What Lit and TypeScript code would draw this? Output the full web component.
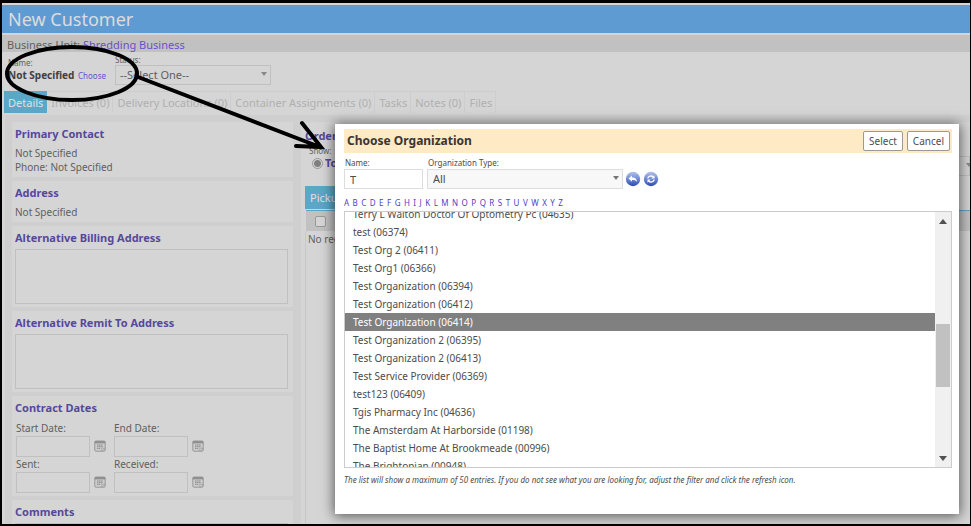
import { LitElement, html, css, svg } from "lit";
import { customElement } from "lit/decorators.js";
import { classMap } from "lit/directives/class-map.js";

const calendar = html`<svg viewBox="0 0 12 12" width="12" height="12" aria-hidden="true">
  <rect x=".8" y="1" width="10.400" height="10.200" rx="1.200" fill="#cdcdcd" stroke="#989898" />
  <path d="M.8 1h10.400v2.400H.8z" fill="#909090" />
  <path d="M3 5h6M3 6.700h6M3 8.400h3.500" stroke="#8a8a8a" stroke-dasharray="1.400 .4" />
  <path d="M7.800 11.200V8.300H11.200z" fill="#dedede" stroke="#989898" stroke-width=".7" />
</svg>`;
const caret = html`<svg class="caret" viewBox="0 0 6 4" width="6" height="4" aria-hidden="true"><path d="M0 0h6L3 4z" fill="currentColor" /></svg>`;

const orb = (glyph: unknown, id: string) => html`<svg viewBox="0 0 16 16" width="16" height="16" aria-hidden="true">
  <defs><linearGradient id=${id} x1="0" y1="0" x2="0" y2="1">
    <stop offset="0" stop-color="#b4c2ea" /><stop offset=".5" stop-color="#6f8ad6" /><stop offset="1" stop-color="#2c49ad" />
  </linearGradient></defs>
  <circle cx="8" cy="8" r="7.200" fill="url(#${id})" />
  ${glyph}
</svg>`;
const backIcon = orb(svg`<path d="M3.500 7.500L7 4.500v2c3 0 5 1.300 5 4.500-1-1.700-2.500-2-5-2v1.700z" fill="#fff" />`, "back");
const refreshIcon = orb(svg`<path d="M4.800 7.300C5.300 5 8.500 4.300 10.200 5.800M11.200 8.700c-.5 2.300-3.700 3-5.400 1.500" fill="none" stroke="#fff" stroke-width="1.400" /><path d="M11.500 4.300v3.200H8.300zM4.500 11.700V8.500h3.200z" fill="#fff" />`, "refresh");

@customElement("choose-organization")
export class ChooseOrganization extends LitElement {
  static styles = css`
    :host { display: flex; flex-direction: column; box-sizing: border-box; background: #fff; padding: 5px 7px 0 9px;
      box-shadow: 0 1px 12px 1px #0009; color: #4c4c4c; font-size: 10px; }
    * { box-sizing: border-box; }
    button, input, select { font: inherit; color: inherit; margin: 0; }
    header { display: flex; align-items: center; gap: 4px; background: #feeac4; height: 24px; padding: 0 2px 0 3px; flex: none; }
    h2 { flex: 1; margin: 0; font-size: 12px; line-height: 20px; color: #3a3530; }
    .action { height: 20px; padding: 0 5px; background: #fff; border: 1px solid #999; border-radius: 2px; line-height: 16px; }
    .filters { display: flex; align-items: flex-end; gap: 4px; margin-top: 4px; }
    .field { display: flex; flex-direction: column; }
    label { font-size: 8px; line-height: 12px; padding-left: 1px; }
    .field input { width: 79px; height: 20px; padding: 0 5px; border: 1px solid #ddd; background: #fff; font-size: 11px; outline: 0; }
    .drop { position: relative; display: block; }
    .drop select { display: block; appearance: none; width: 196px; height: 20px; padding: 0 5px; border: 1px solid #ddd; background: #f8f8f8; border-radius: 0; font-size: 11px; }
    .caret { position: absolute; right: 4px; top: 7px; color: #777; }
    .round { display: flex; padding: 0; border: 0; background: none; width: 16px; height: 20px; align-items: center; justify-content: center; }
    .round svg { flex: none; }
    .icons { display: flex; gap: 2px; margin-left: -2px; }
    .letters { display: flex; justify-content: space-between; width: 219px; margin-top: 8px; font-size: 8px; line-height: 12px; }
    .letters a { color: #4f3fc0; text-decoration: none; }
    .list { display: flex; flex: 1; min-height: 0; margin-top: 2px; border: 1px solid #ccc; }
    ul { flex: 1; margin: 0; padding: 0; list-style: none; overflow: hidden; }
    li { height: 18px; line-height: 18px; padding: 0 8px; }
    .chosen { background: #808080; color: #fff; }
    .bar { display: flex; flex-direction: column; align-items: center; width: 16px; padding: 7px 0 6px; background: #f0f0f0; color: #505050; }
    .bar svg { flex: none; }
    .thumb { width: 14px; height: 63px; background: #c1c1c1; margin: 100px 0 auto; }
    .note { margin: 6px 0 28px; font-size: 8px; line-height: 12px; font-style: italic; }
  `;
  private names = ["Terry L Walton Doctor Of Optometry Pc (04635)", "test (06374)", "Test Org 2 (06411)", "Test Org1 (06366)",
    "Test Organization (06394)", "Test Organization (06412)", "Test Organization (06414)", "Test Organization 2 (06395)",
    "Test Organization 2 (06413)", "Test Service Provider (06369)", "test123 (06409)", "Tgis Pharmacy Inc (04636)",
    "The Amsterdam At Harborside (01198)", "The Baptist Home At Brookmeade (00996)", "The Brightonian (00948)"];
  private selected = 6;

  firstUpdated() {
    this.renderRoot.querySelector("ul")!.scrollTop = 7;
  }

  render() {
    return html`
      <header><h2>Choose Organization</h2><button class="action">Select</button><button class="action">Cancel</button></header>
      <div class="filters">
        <div class="field"><label for="name">Name:</label><input id="name" value="T" /></div>
        <div class="field"><label for="type">Organization Type:</label><span class="drop"><select id="type"><option>All</option></select>${caret}</span></div>
        <div class="icons"><button class="round" aria-label="Reset filter">${backIcon}</button>
        <button class="round" aria-label="Refresh list">${refreshIcon}</button></div>
      </div>
      <nav class="letters">${[..."ABCDEFGHIJKLMNOPQRSTUVWXYZ"].map((l) => html`<a href="#${l}">${l}</a>`)}</nav>
      <div class="list">
        <ul role="listbox" aria-label="Organizations">${this.names.map((n, i) => html`<li role="option" aria-selected=${i === this.selected} class=${classMap({ chosen: i === this.selected })}>${n}</li>`)}</ul>
        <div class="bar" aria-hidden="true">
          <svg width="8" height="5" viewBox="0 0 8 5"><path d="M0 5h8L4 0z" fill="currentColor" /></svg>
          <div class="thumb"></div>
          <svg width="8" height="5" viewBox="0 0 8 5"><path d="M0 0h8L4 5z" fill="currentColor" /></svg>
        </div>
      </div>
      <p class="note">The list will show a maximum of 50 entries. If you do not see what you are looking for, adjust the filter and click the refresh icon.</p>`;
  }
}

@customElement("app-root")
export class AppRoot extends LitElement {
  static styles = css`
    :host { display: flex; flex-direction: column; box-sizing: border-box; position: relative; height: 100vh; overflow: hidden;
      border: solid #000; border-width: 3px 1px 2px 2px; background: #d5d5d5; color: #606060;
      font-family: "Noto Sans", "Open Sans", sans-serif; font-size: 10px; line-height: 14px; }
    * { box-sizing: border-box; }
    a { color: #6a4fd0; text-decoration: none; }
    input, select, textarea { font: inherit; color: inherit; margin: 0; border: 1px solid #c0c0c0; background: #d5d5d5; border-radius: 0; }
    h1 { margin: 2px 0; padding: 1px 6px 0; background: #5f9bd3; color: #dcdcdc; font-size: 18px; font-weight: 400; line-height: 27px; flex: none; }
    .unit { padding: 2px 5px 0; background: #c1c1c1; font-size: 11px; line-height: 15px; flex: none; }
    .ident { display: flex; gap: 10px; padding: 3px 6px 0; height: 39px; flex: none; }
    .small { display: block; font-size: 8px; line-height: 10px; }
    .who { padding-top: 3px; width: 97px; white-space: nowrap; }
    .who b { color: #404040; }
    .who a { font-size: 8px; margin-left: 1px; }
    .drop { position: relative; display: block; }
    .drop select { display: block; appearance: none; width: 156px; height: 20px; padding: 0 4px; font-size: 11px; }
    .caret { position: absolute; right: 4px; top: 7px; color: #888; }
    .tabs { display: flex; padding-left: 2px; height: 22px; flex: none; font-size: 11px; line-height: 22px; }
    .tabs a { color: #b0b0b0; padding: 0 3px 0 4px; border: solid #cdcdcd; border-width: 1px 1px 0 0; white-space: nowrap; }
    .tabs .on { background: #5ba7c7; color: #e0e0e0; border-color: #5ba7c7; }
    .body { display: flex; flex: 1; min-height: 0; background: #cfcfcf; margin: 2px 0 0 3px; padding-top: 7px; }
    .left { width: 289px; padding-left: 7px; display: flex; flex-direction: column; gap: 4px; flex: none; }
    .left section { background: #d5d5d5; padding: 4px 3px 3px; flex: none; width: 281px; }
    h3 { margin: 0; color: #55489c; font-size: 11px; line-height: 16px; }
    section p { margin: 4px 0 0; }
    section textarea { display: block; width: 273px; height: 55px; resize: none; margin-top: 3px; }
    .dates { display: grid; grid-template-columns: 98px 98px; margin: 5px 0 0 1px; }
    .dates label { display: block; }
    .pick { display: flex; align-items: center; gap: 4px; height: 22px; }
    .pick input { width: 74px; height: 21px; }
    .pick button { display: flex; padding: 0; border: 0; background: none; }
    .right { flex: 1; background: #d5d5d5; margin-left: 7px; padding: 6px 0 0 4px; }
    .show { display: flex; justify-content: space-between; padding-left: 4px; height: 42px; }
    .show .small { padding-top: 2px; }
    .opt { display: flex; align-items: center; gap: 2px; color: #55489c; font-size: 11px; font-weight: 700; padding-left: 3px; }
    .period { margin-top: 12px; }
    .period .caret { right: -2px; }
    input[type="radio"], input[type="checkbox"] { width: 11px; height: 11px; appearance: none; border: 1px solid #999; }
    input[type="radio"] { border-radius: 50%; background: radial-gradient(#808080 0 3px, #d5d5d5 4px); }
    input[type="checkbox"] { border-radius: 2px; display: block; }
    .sheet { display: inline-block; background: #5ba7c7; color: #e0e0e0; height: 23px; line-height: 23px; padding: 0 5px; font-size: 11px; vertical-align: top; }
    table { width: 100%; margin-top: 1px; border-collapse: collapse; }
    th { background: #c1c1c1; border-top: 1px solid #5ba7c7; padding: 5px 9px 4px; }
    td { padding: 1px 2px; border-left: 1px solid #c8c8c8; height: 400px; vertical-align: top; font-size: 10px; }
    choose-organization { position: absolute; top: 121px; left: 333px; right: 11px; bottom: 10px; }
    .mark { position: absolute; left: -2px; top: -3px; pointer-events: none; }
  `;

  private date(id: string, label: string) {
    return html`<div><label for=${id}>${label}</label><div class="pick"><input id=${id} /><button aria-label="Pick date">${calendar}</button></div></div>`;
  }

  render() {
    const tabs = ["Details", "Invoices (0)", "Delivery Locations (0)", "Container Assignments (0)", "Tasks", "Notes (0)", "Files"];
    return html`
      <h1>New Customer</h1>
      <div class="unit">Business Unit: <a href="#unit">Shredding Business</a></div>
      <div class="ident">
        <div class="who"><span class="small">Name:</span><b>Not Specified</b> <a href="#choose">Choose</a></div>
        <div><label class="small" for="status">Status:</label><span class="drop"><select id="status"><option>--Select One--</option></select>${caret}</span></div>
      </div>
      <nav class="tabs">${tabs.map((t, i) => html`<a href="#tab${i}" class=${classMap({ on: i === 0 })}>${t}</a>`)}</nav>
      <div class="body">
        <div class="left">
          <section><h3>Primary Contact</h3><p>Not Specified<br />Phone: Not Specified</p></section>
          <section><h3>Address</h3><p>Not Specified</p></section>
          <section><h3>Alternative Billing Address</h3><textarea aria-label="Alternative Billing Address"></textarea></section>
          <section><h3>Alternative Remit To Address</h3><textarea aria-label="Alternative Remit To Address"></textarea></section>
          <section><h3>Contract Dates</h3><div class="dates">
            ${this.date("start", "Start Date:")}${this.date("end", "End Date:")}${this.date("sent", "Sent:")}${this.date("received", "Received:")}
          </div></section>
          <section><h3>Comments</h3><textarea aria-label="Comments"></textarea></section>
        </div>
        <div class="right">
          <h3>Orders</h3>
          <div class="show">
            <div><span class="small">Show:</span><label class="opt"><input type="radio" checked />Today</label></div>
            <span class="drop period"><select aria-label="Period"></select>${caret}</span>
          </div>
          <span class="sheet">Pickups</span>
          <table><thead><tr><th><input type="checkbox" aria-label="Select all" /></th></tr></thead>
          <tbody><tr><td>No records</td></tr></tbody></table>
        </div>
      </div>
      <choose-organization role="dialog" aria-label="Choose Organization"></choose-organization>
      <svg class="mark" width="971" height="526" viewBox="0 0 971 526" fill="none" stroke="#000" stroke-width="4" stroke-linecap="round" aria-hidden="true">
        <ellipse cx="72" cy="73.500" rx="65" ry="26.500" />
        <path d="M138 77L320 147M302 123L321 147L296 146" />
      </svg>`;
  }
}
